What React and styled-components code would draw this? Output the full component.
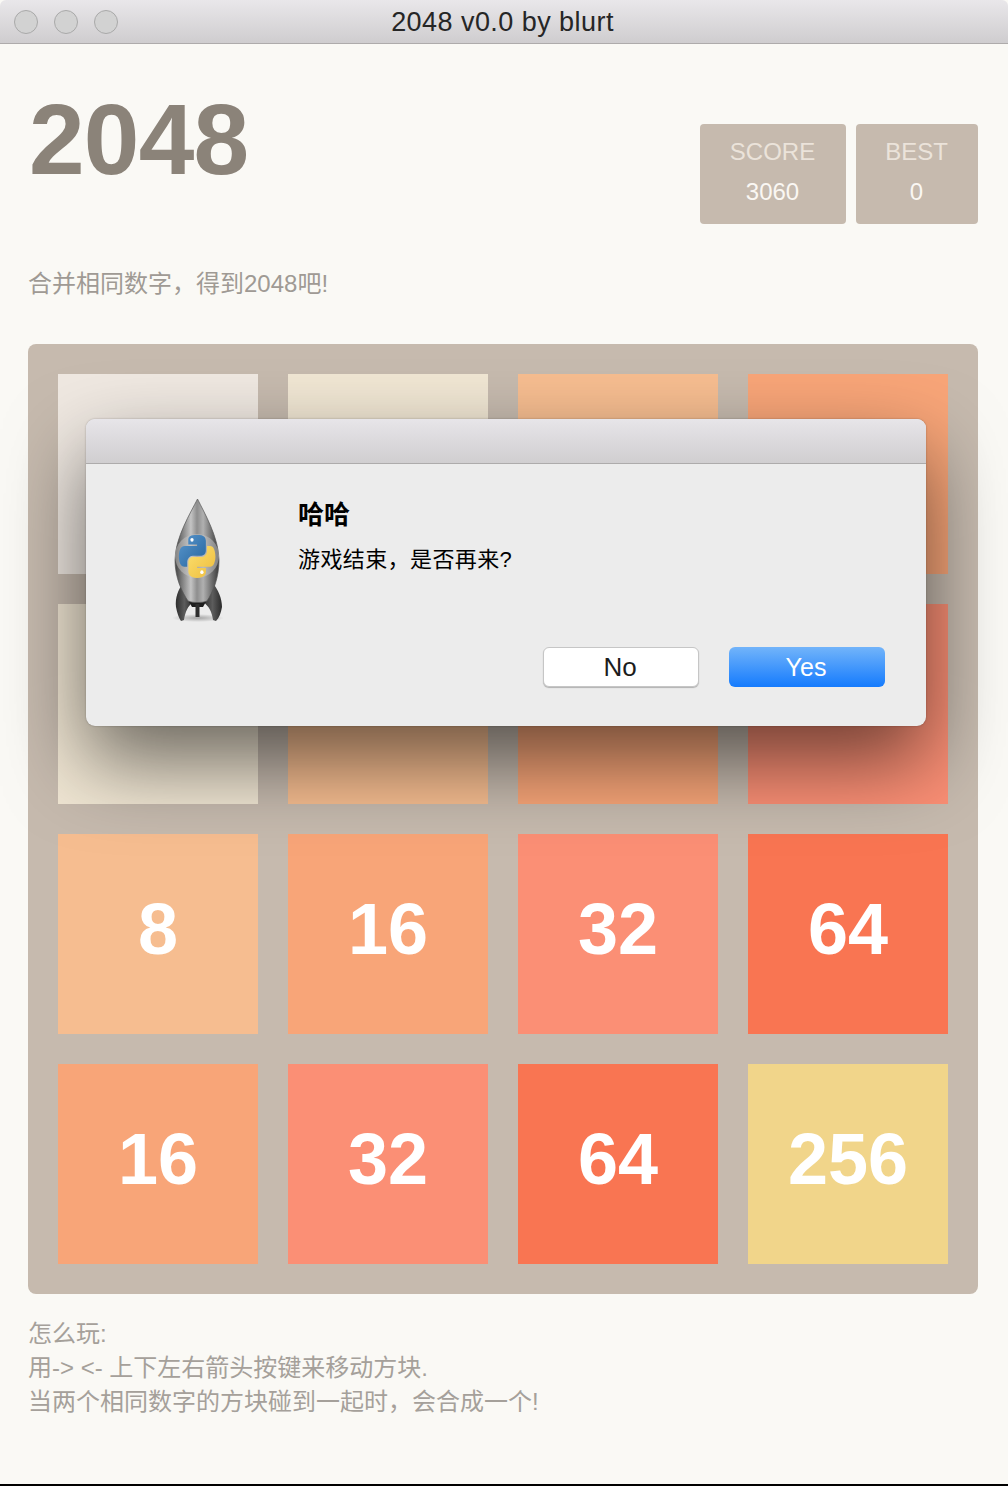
import React from "react";
import styled, { createGlobalStyle } from "styled-components";

const Global = createGlobalStyle`
  html, body { margin: 0; padding: 0; background: #fff; }
  * { box-sizing: border-box; }
`;
const SANS = `"Liberation Sans", "Noto Sans CJK SC", sans-serif`;

const Window = styled.div`
  position: relative;
  width: 1008px;
  height: 1486px;
  display: flex;
  flex-direction: column;
  background: #faf9f5;
  border-bottom: 2px solid #000;
  font-family: ${SANS};
  overflow: hidden;
`;
const TitleBar = styled.div`
  position: relative;
  flex: none;
  height: 44px;
  display: flex;
  align-items: center;
  justify-content: center;
  padding: 2px 3px 0 0;
  border-bottom: 1px solid #aeabab;
  border-radius: 6px 6px 0 0;
  background: linear-gradient(#e9e7ea, #cfcdcf);
`;
const Lights = styled.div`
  position: absolute;
  top: 10px;
  left: 14px;
  display: flex;
  gap: 16px;
`;
const Light = styled.span`
  width: 24px;
  height: 24px;
  border-radius: 50%;
  background: #d2d2d2;
  border: 1px solid #a9a9a9;
`;
const WindowTitle = styled.div`
  font-size: 27px;
  letter-spacing: 0.45px;
  color: #262626;
`;
const Content = styled.main`
  flex: 1;
  padding: 0 30px 0 28px;
`;
const Header = styled.header`
  display: flex;
  justify-content: space-between;
  align-items: flex-start;
`;
const GameTitle = styled.h1`
  margin: 45px 0 0 1px;
  font-size: 100px;
  line-height: 100px;
  font-weight: 700;
  color: #8b8379;
  letter-spacing: -0.8px;
`;
const Scores = styled.div`
  margin-top: 80px;
  display: flex;
  gap: 10px;
`;
const ScoreBox = styled.div`
  width: ${(p) => p.$width}px;
  height: 100px;
  padding: 8px 1px 0 0;
  background: #c6baae;
  border-radius: 4px;
  text-align: center;
  font-size: 24px;
  line-height: 40px;
`;
const ScoreLabel = styled.div`
  color: #ebe3da;
`;
const ScoreValue = styled.div`
  color: #faf7f3;
`;
const Intro = styled.p`
  margin: 43px 0 43px;
  font-size: 24px;
  line-height: 34px;
  color: #9f9a94;
`;
const Board = styled.section`
  width: 950px;
  height: 950px;
  padding: 30px;
  display: grid;
  grid-template-columns: repeat(4, 200px);
  grid-auto-rows: 200px;
  gap: 30px;
  background: #c6baae;
  border-radius: 8px;
`;
const TILE_COLORS = {
  2: "#efe8e1",
  4: "#f0e6d3",
  8: "#f6bd90",
  16: "#f8a578",
  32: "#fb8f75",
  64: "#f97552",
  256: "#f1d58a",
};
const Tile = styled.div`
  display: flex;
  align-items: center;
  justify-content: center;
  padding-bottom: 10px;
  background: ${(p) => TILE_COLORS[p.$value]};
  color: #fff;
  font-size: 72px;
  font-weight: 700;
  line-height: 1;
`;
const Help = styled.div`
  margin-top: 23px;
  font-size: 24px;
  line-height: 34px;
  color: #a5a09a;
`;
const Dialog = styled.div`
  position: absolute;
  top: 419px;
  left: 86px;
  width: 840px;
  height: 307px;
  display: flex;
  flex-direction: column;
  border-radius: 9px;
  background: #ececec;
  box-shadow: 0 35px 80px rgba(0, 0, 0, 0.56), 0 0 2px rgba(0, 0, 0, 0.3);
  overflow: hidden;
`;
const DialogBar = styled.div`
  flex: none;
  height: 45px;
  background: linear-gradient(#e7e5e9, #d0ced0);
  border-bottom: 1px solid #adabab;
`;
const DialogBody = styled.div`
  flex: 1;
  display: flex;
  padding: 34px 41px 39px 86px;
`;
const RocketIcon = styled.svg`
  flex: none;
  width: 54px;
  height: 130px;
  margin-top: -3px;
`;
const DialogMain = styled.div`
  flex: 1;
  display: flex;
  flex-direction: column;
  margin-left: 72px;
`;
const DialogTitle = styled.div`
  margin-top: -1px;
  font-size: 26px;
  font-weight: 700;
  line-height: 36px;
  color: #000;
`;
const DialogText = styled.div`
  margin-top: 11px;
  font-size: 22px;
  line-height: 32px;
  letter-spacing: 0.4px;
  color: #000;
`;
const Actions = styled.div`
  margin-top: auto;
  display: flex;
  justify-content: flex-end;
  gap: 30px;
`;
const Button = styled.button`
  width: 156px;
  height: 40px;
  padding: 0 2px 0 0;
  border-radius: 6px;
  font-family: ${SANS};
  font-size: ${(p) => (p.$primary ? "25px" : "26px")};
  color: ${(p) => (p.$primary ? "#fff" : "#1c1c1c")};
  border: ${(p) => (p.$primary ? "none" : "1px solid #c6c6c6")};
  background: ${(p) => (p.$primary ? "linear-gradient(#72b4fa, #157bfd)" : "#fff")};
  box-shadow: ${(p) => (p.$primary ? "none" : "0 1px 1px rgba(0,0,0,0.25)")};
`;

const Rocket = () => (
  <RocketIcon viewBox="172 495 54 130" aria-hidden="true">
    <defs>
      <linearGradient id="hull" x1="0" x2="1" y1="0" y2="0">
        <stop offset="0" stopColor="#3f3f3f" />
        <stop offset="0.14" stopColor="#777" />
        <stop offset="0.36" stopColor="#c4c4c4" />
        <stop offset="0.5" stopColor="#8e8e8e" />
        <stop offset="0.64" stopColor="#b0b0b0" />
        <stop offset="0.86" stopColor="#666" />
        <stop offset="1" stopColor="#3a3a3a" />
      </linearGradient>
      <linearGradient id="fin" x1="0" x2="1" y1="0" y2="0">
        <stop offset="0" stopColor="#2e2e2e" />
        <stop offset="0.5" stopColor="#5c5c5c" />
        <stop offset="1" stopColor="#2a2a2a" />
      </linearGradient>
      <linearGradient id="blue" x1="0" x2="1" y1="0" y2="1">
        <stop offset="0" stopColor="#5a97cd" />
        <stop offset="1" stopColor="#25649e" />
      </linearGradient>
      <linearGradient id="yellow" x1="0" x2="1" y1="0" y2="1">
        <stop offset="0" stopColor="#fbe070" />
        <stop offset="1" stopColor="#eebc3c" />
      </linearGradient>
      <radialGradient id="ground">
        <stop offset="0" stopColor="#000" stopOpacity="0.3" />
        <stop offset="1" stopColor="#000" stopOpacity="0" />
      </radialGradient>
    </defs>
    <ellipse cx="198" cy="618" rx="26" ry="4" fill="url(#ground)" />
    <path d="M183 583 C178 590 175 598 176 607 C177 613 179 618 181 621 L184 620 C185 612 188 606 193 602 Z" fill="url(#fin)" />
    <path d="M213 583 C218 590 222 598 222 607 C221 613 219 618 216 621 L213 620 C212 612 209 606 203 602 Z" fill="url(#fin)" />
    <path d="M188 600 H207 L203 607 H192 Z" fill="#1e1e1e" />
    <rect x="195.5" y="604" width="4" height="13" fill="#2e2e2e" />
    <path d="M197.5 499 C191 512 175 538 175 560 C175 578 182 592 188 601 C193 603 202 603 207 601 C213 592 219 578 219 560 C219 538 204 512 197.5 499 Z" fill="url(#hull)" stroke="#555" strokeWidth="0.7" />
    <circle cx="197" cy="556" r="22" fill="#c8c8c8" opacity="0.5" />
    <g transform="translate(178.8 534.8) scale(0.33 0.385)">
      <path d="M54.9 0.2c-4.6 0-9 .4-12.8 1.1C30.8 3.3 28.7 7.5 28.7 15.2v10.2h26.7v3.4H18.7c-7.8 0-14.6 4.7-16.7 13.5-2.5 10.2-2.6 16.5 0 27.1 1.9 7.9 6.4 13.5 14.2 13.5h9.2V70.7c0-8.8 7.6-16.6 16.7-16.6h26.6c7.4 0 13.3-6.1 13.3-13.5V15.2c0-7.2-6.1-12.7-13.3-13.9C64.4.5 59.6.2 54.9.2z" fill="url(#blue)" />
      <circle cx="40" cy="13" r="5" fill="#fff" />
      <path d="M85.6 28.9v11.9c0 9.2-7.8 17-16.7 17H42.3c-7.3 0-13.3 6.2-13.3 13.5v25.4c0 7.2 6.3 11.5 13.3 13.6 8.5 2.5 16.6 2.9 26.6 0 6.7-1.9 13.3-5.8 13.3-13.6V86.5H55.7v-3.4h39.9c7.7 0 10.6-5.4 13.3-13.5 2.8-8.4 2.7-16.4 0-27.1-1.9-7.7-5.6-13.5-13.3-13.5H85.6z" fill="url(#yellow)" />
      <circle cx="70" cy="97" r="5" fill="#fff" />
    </g>
  </RocketIcon>
);

const TILES = [
  [2, ""], [4, ""], [8, ""], [16, ""],
  [4, ""], [8, ""], [16, ""], [32, ""],
  [8, "8"], [16, "16"], [32, "32"], [64, "64"],
  [16, "16"], [32, "32"], [64, "64"], [256, "256"],
];

export default function App() {
  return (
    <Window>
      <Global />
      <TitleBar>
        <Lights>
          <Light />
          <Light />
          <Light />
        </Lights>
        <WindowTitle>2048 v0.0 by blurt</WindowTitle>
      </TitleBar>
      <Content>
        <Header>
          <GameTitle>2048</GameTitle>
          <Scores>
            <ScoreBox $width={146}>
              <ScoreLabel>SCORE</ScoreLabel>
              <ScoreValue>3060</ScoreValue>
            </ScoreBox>
            <ScoreBox $width={122}>
              <ScoreLabel>BEST</ScoreLabel>
              <ScoreValue>0</ScoreValue>
            </ScoreBox>
          </Scores>
        </Header>
        <Intro>合并相同数字，得到2048吧!</Intro>
        <Board>
          {TILES.map(([value, label], i) => (
            <Tile key={i} $value={value}>{label}</Tile>
          ))}
        </Board>
        <Help>
          怎么玩:
          <br />
          用-&gt; &lt;- 上下左右箭头按键来移动方块.
          <br />
          当两个相同数字的方块碰到一起时，会合成一个!
        </Help>
      </Content>
      <Dialog>
        <DialogBar />
        <DialogBody>
          <Rocket />
          <DialogMain>
            <DialogTitle>哈哈</DialogTitle>
            <DialogText>游戏结束，是否再来?</DialogText>
            <Actions>
              <Button>No</Button>
              <Button $primary>Yes</Button>
            </Actions>
          </DialogMain>
        </DialogBody>
      </Dialog>
    </Window>
  );
}
